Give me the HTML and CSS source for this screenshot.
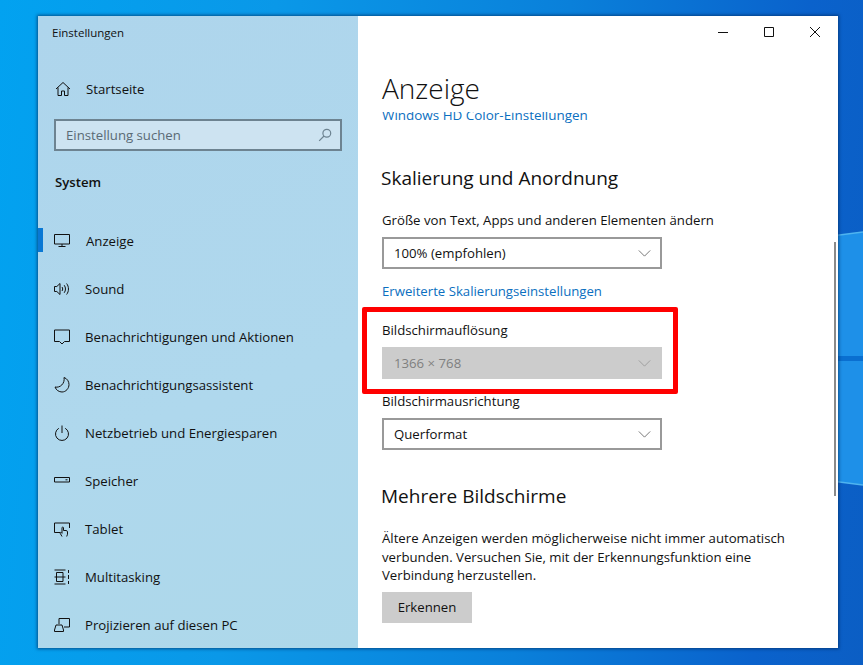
FILE: index.html
```html
<!DOCTYPE html>
<html lang="de">
<head>
<meta charset="utf-8">
<title>Einstellungen</title>
<link rel="stylesheet" href="styles.css">
</head>
<body>
<div class="desktop">
  <svg class="wallpaper" viewBox="0 0 863 665" aria-hidden="true">
    <path class="beam" d="M800 240 863 232V485L800 477z"/>
    <path class="beam-dark" d="M800 356H863V361H800z"/>
    <path class="beam-edge" d="M800 240 863 232M800 477 863 485"/>
  </svg>
  <div class="window">
    <aside class="sidebar">
      <div class="app-title">Einstellungen</div>
      <div class="nav-row home">
        <svg class="icon" viewBox="0 0 16 16"><path d="M1 8 8 1.500 15 8M3 6.500v8h3.500V10h3v4.500H13v-8"/></svg>
        <span>Startseite</span>
      </div>
      <div class="search">
        <span>Einstellung suchen</span>
        <svg class="search-icon" viewBox="0 0 14 14"><circle cx="8.800" cy="5.200" r="3.900"/><path d="M6 8 1.200 12.800"/></svg>
      </div>
      <div class="group">System</div>
      <nav class="nav">
        <div class="nav-row active">
          <svg class="icon" viewBox="0 0 16 16"><path d="M.5 1.500h15v9.500H.5zM8 11v2.500M4.500 13.500h7"/></svg>
          <span>Anzeige</span>
        </div>
        <div class="nav-row">
          <svg class="icon" viewBox="0 0 16 16"><path d="M.5 5.500h2.300L6 2.500v11l-3.200-3H.5zM8 6c.9 1.200.9 2.800 0 4M10.200 4.200c1.700 2.200 1.700 5.400 0 7.600M12.600 2.500c2.500 3.200 2.500 7.800 0 11"/></svg>
          <span>Sound</span>
        </div>
        <div class="nav-row">
          <svg class="icon" viewBox="0 0 16 16"><path d="M.5 1h15v11.500h-5L8 15l-2.500-2.500h-5z"/></svg>
          <span>Benachrichtigungen und Aktionen</span>
        </div>
        <div class="nav-row">
          <svg class="icon" viewBox="0 0 16 16"><path d="M10 .5c3.200 1 5 4 5 7 0 4-3.200 7.500-7 7.500-3 0-6-2-7-5 5 1.200 10.200-3.500 9-9.500z"/></svg>
          <span>Benachrichtigungsassistent</span>
        </div>
        <div class="nav-row">
          <svg class="icon" viewBox="0 0 16 16"><path d="M8 .5v7.500M4.800 3.300a6.500 6.500 0 1 0 6.400 0"/></svg>
          <span>Netzbetrieb und Energiesparen</span>
        </div>
        <div class="nav-row">
          <svg class="icon" viewBox="0 0 16 16"><path d="M.5 4.500h15v4.500H.5zM11.500 6.800h2"/></svg>
          <span>Speicher</span>
        </div>
        <div class="nav-row">
          <svg class="icon" viewBox="0 0 16 16"><path d="M6 11.500H.5v-9.500h15v5M8 15.500l-1.800-3.200c-.3-.8.600-1.300 1.200-.7l.6.700V6.800c0-1 1.500-1 1.500 0v2.700h2.600c.8 0 1.400.6 1.400 1.400v2.300l-.8 2.300"/></svg>
          <span>Tablet</span>
        </div>
        <div class="nav-row">
          <svg class="icon" viewBox="0 0 16 16"><path d="M.5 1h11M.5 15h11M2.500 3.500h6.500v9H2.500zM.5 8h11M14.500 1v3M14.500 6v4M14.500 12V15"/></svg>
          <span>Multitasking</span>
        </div>
        <div class="nav-row">
          <svg class="icon" viewBox="0 0 16 16"><path d="M5 7V1.500h10.500v8.500H10M.5 14.500v-1.500L2 8h6l1.500 5v1.500z"/></svg>
          <span>Projizieren auf diesen PC</span>
        </div>
      </nav>
    </aside>
    <main class="pane">
      <div class="caption">
        <svg class="cap-icon" viewBox="0 0 10 10"><path d="M0 5.500h10"/></svg>
        <svg class="cap-icon" viewBox="0 0 10 10"><path d="M.5.500h9v9h-9z"/></svg>
        <svg class="cap-icon" viewBox="0 0 10 10"><path d="M0 0l10 10M10 0 0 10"/></svg>
      </div>
      <h1 class="page-title">Anzeige</h1>
      <div class="scroller">
        <a class="link first-link">Windows HD Color-Einstellungen</a>
        <h2 class="section">Skalierung und Anordnung</h2>
        <div class="label">Größe von Text, Apps und anderen Elementen ändern</div>
        <div class="select"><span>100% (empfohlen)</span><svg class="chev" viewBox="0 0 14 8"><path d="M.5.500 7 7 13.500.500"/></svg></div>
        <a class="link second-link">Erweiterte Skalierungseinstellungen</a>
        <div class="label res-label">Bildschirmauflösung</div>
        <div class="select disabled"><span>1366 × 768</span><svg class="chev" viewBox="0 0 14 8"><path d="M.5.500 7 7 13.500.500"/></svg></div>
        <div class="label orient-label">Bildschirmausrichtung</div>
        <div class="select"><span>Querformat</span><svg class="chev" viewBox="0 0 14 8"><path d="M.5.500 7 7 13.500.500"/></svg></div>
        <h2 class="section second-section">Mehrere Bildschirme</h2>
        <p class="body-text">Ältere Anzeigen werden möglicherweise nicht immer automatisch verbunden. Versuchen Sie, mit der Erkennungsfunktion eine Verbindung herzustellen.</p>
        <div class="button">Erkennen</div>
      </div>
      <div class="scrollbar"></div>
    </main>
  </div>
  <div class="highlight"></div>
</div>
</body>
</html>
```

FILE: styles.css
```css
* { box-sizing: border-box; }
html, body { margin: 0; height: 100%; overflow: hidden; }
body { font-family: "Open Sans", "Noto Sans", sans-serif; color: #111; }

.desktop {
  position: relative;
  width: 863px;
  height: 665px;
  padding: 16px 25px 17px 38px;
  overflow: hidden;
  background: linear-gradient(95deg, #02a2f0 0%, #0a98e8 30%, #0a80da 62%, #0a62cc 88%, #0b5ec4 100%);
}
.wallpaper { position: absolute; left: 0; top: 0; width: 863px; height: 665px; }
.beam { fill: #1e90e8; }
.beam-dark { fill: #0a6fd0; }
.beam-edge { fill: none; stroke: #4fb4f0; stroke-width: 1.500; }

.window {
  position: relative;
  display: flex;
  width: 800px;
  height: 632px;
  background: #fff;
  box-shadow: 0 0 3px 1px rgba(0, 40, 90, .65);
}

.sidebar {
  flex: none;
  width: 320px;
  background: linear-gradient(160deg, #aed5ec 0%, #afd8ed 60%, #add8ea 100%);
  font-size: 13.200px;
}
.app-title { padding: 10px 0 0 14px; height: 56px; font-size: 11.500px; line-height: 14px; }

.nav-row {
  position: relative;
  display: flex;
  align-items: center;
  height: 48px;
  padding-left: 16px;
}
.nav-row span { margin-left: 15px; }
.home { height: 34px; padding-left: 17px; }
.active span { margin-left: 16px; }
.icon { flex: none; width: 16px; height: 16px; fill: none; stroke: #111; stroke-width: 1; }

.search {
  display: flex;
  align-items: center;
  justify-content: space-between;
  width: 288px;
  height: 32px;
  margin: 13px 0 0 16px;
  padding: 0 8px 0 10px;
  background: #cde3f1;
  border: 2px solid #6d8391;
  color: #5a6a75;
}
.search-icon { width: 14px; height: 14px; fill: none; stroke: #6d8391; stroke-width: 1.200; }

.group { margin: 22px 0 0 17px; height: 44px; line-height: 18px; font-weight: 600; }

.active::before {
  content: "";
  position: absolute;
  left: 0;
  top: 11px;
  width: 5px;
  height: 24px;
  background: #0a78d4;
}

.pane { position: relative; flex: 1; display: flex; flex-direction: column; min-width: 0; }

.caption {
  display: flex;
  justify-content: flex-end;
  align-items: center;
  gap: 36px;
  height: 32px;
  padding-right: 18px;
}
.cap-icon { width: 10px; height: 10px; fill: none; stroke: #111; stroke-width: 1; }

.page-title {
  margin: 0;
  height: 64px;
  padding: 21px 0 0 24px;
  font-size: 28px;
  line-height: 38px;
  font-weight: 300;
  color: #111;
}

.scroller { flex: 1; padding-left: 24px; overflow: hidden; font-size: 13.200px; }

.link { display: block; color: #0b6fc0; line-height: 18px; }
.first-link { margin-top: -6px; font-size: 13.450px; }
.second-link { margin-top: 13px; }

.section { margin: 41px 0 0 -1px; font-weight: 400; font-size: 19px; line-height: 26px; color: #111; }
.second-section { margin-top: 33px; }

.label { line-height: 18px; margin-top: 20px; margin-bottom: 8px; }
.res-label { margin-top: 21px; margin-bottom: 8px; }
.orient-label { margin-top: 13px; margin-bottom: 8px; }

.select {
  display: flex;
  align-items: center;
  justify-content: space-between;
  width: 280px;
  height: 32px;
  padding: 0 9px 0 10px;
  border: 2px solid #999;
}
.disabled { background: #ccc; border-color: #ccc; color: #7f7f7f; }
.chev { width: 13px; height: 7px; fill: none; stroke: #666; stroke-width: 1; }
.disabled .chev { stroke: #999; }

.body-text { margin: 20px 0 0; width: 420px; line-height: 18.500px; }

.button {
  display: flex;
  align-items: center;
  justify-content: center;
  width: 90px;
  height: 31px;
  margin-top: 7px;
  background: #ccc;
}

.scrollbar {
  position: absolute;
  right: 2px;
  top: 226px;
  width: 2px;
  height: 254px;
  background: #8a8a8a;
}

.highlight {
  position: absolute;
  left: 362px;
  top: 307px;
  width: 316px;
  height: 87px;
  border: 5px solid #f00;
  border-radius: 2px;
}
```
